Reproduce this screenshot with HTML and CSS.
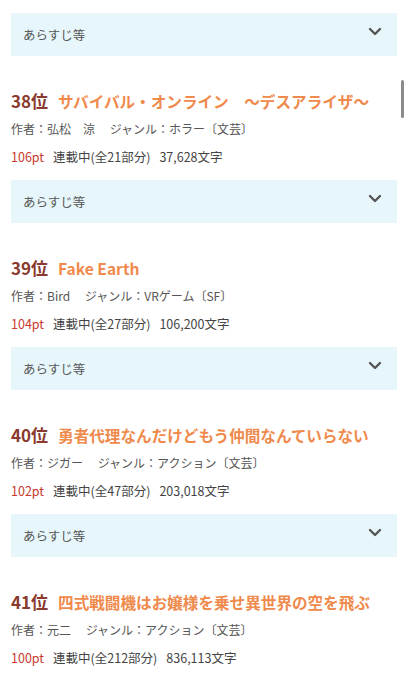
FILE: index.html
```html
<!DOCTYPE html>
<html lang="ja">
<head>
<meta charset="utf-8">
<link rel="stylesheet" href="styles.css">
</head>
<body>
<div class="list">
  <div class="summary"><span>あらすじ等</span><svg class="chev" viewBox="0 0 14 9" width="14" height="9"><path d="M2 2 L7 7 L12 2" fill="none" stroke="#555" stroke-width="2.4" stroke-linecap="round" stroke-linejoin="round"/></svg></div>

  <div class="item">
    <div class="title"><span class="rank">38位</span><span class="name">サバイバル・オンライン　～デスアライザ～</span></div>
    <div class="author">作者：弘松　涼　 ジャンル：ホラー〔文芸〕</div>
    <div class="meta"><span class="pt">106pt</span><span>連載中(全21部分)</span><span>37,628文字</span></div>
    <div class="summary"><span>あらすじ等</span><svg class="chev" viewBox="0 0 14 9" width="14" height="9"><path d="M2 2 L7 7 L12 2" fill="none" stroke="#555" stroke-width="2.4" stroke-linecap="round" stroke-linejoin="round"/></svg></div>
  </div>

  <div class="item">
    <div class="title"><span class="rank">39位</span><span class="name">Fake Earth</span></div>
    <div class="author">作者：Bird　 ジャンル：VRゲーム〔SF〕</div>
    <div class="meta"><span class="pt">104pt</span><span>連載中(全27部分)</span><span>106,200文字</span></div>
    <div class="summary"><span>あらすじ等</span><svg class="chev" viewBox="0 0 14 9" width="14" height="9"><path d="M2 2 L7 7 L12 2" fill="none" stroke="#555" stroke-width="2.4" stroke-linecap="round" stroke-linejoin="round"/></svg></div>
  </div>

  <div class="item">
    <div class="title"><span class="rank">40位</span><span class="name">勇者代理なんだけどもう仲間なんていらない</span></div>
    <div class="author">作者：ジガー　 ジャンル：アクション〔文芸〕</div>
    <div class="meta"><span class="pt">102pt</span><span>連載中(全47部分)</span><span>203,018文字</span></div>
    <div class="summary"><span>あらすじ等</span><svg class="chev" viewBox="0 0 14 9" width="14" height="9"><path d="M2 2 L7 7 L12 2" fill="none" stroke="#555" stroke-width="2.4" stroke-linecap="round" stroke-linejoin="round"/></svg></div>
  </div>

  <div class="item">
    <div class="title"><span class="rank">41位</span><span class="name">四式戦闘機はお嬢様を乗せ異世界の空を飛ぶ</span></div>
    <div class="author">作者：元二　 ジャンル：アクション〔文芸〕</div>
    <div class="meta"><span class="pt">100pt</span><span>連載中(全212部分)</span><span>836,113文字</span></div>
  </div>
</div>
<div class="scrollbar"></div>
</body>
</html>
```
FILE: styles.css
```css
html, body {
  margin: 0;
  padding: 0;
  background: #fff;
  font-family: "Noto Sans CJK JP", "Noto Sans", sans-serif;
  color: #444;
  overflow: hidden;
}
.list {
  padding: 13px 11px 0 11px;
}
.summary {
  height: 43px;
  background: #e6f6fa;
  display: flex;
  justify-content: space-between;
  align-items: flex-start;
  padding: 0 15px 0 12px;
  box-sizing: border-box;
  font-size: 12.5px;
  color: #555;
}
.summary span {
  line-height: 43px;
}
.chev {
  margin-top: 14px;
}
.item {
  margin-top: 33px;
}
.title {
  height: 24px;
  line-height: 24px;
  font-weight: bold;
  white-space: nowrap;
  display: flex;
  gap: 10px;
}
.rank {
  color: #8a3a2e;
  font-size: 17px;
}
.name {
  color: #ef8a4c;
  font-size: 15.6px;
}
.author {
  margin-top: 6px;
  height: 20px;
  line-height: 20px;
  font-size: 12px;
  color: #555;
  white-space: nowrap;
}
.meta {
  margin-top: 8px;
  height: 20px;
  line-height: 20px;
  font-size: 12.5px;
  color: #444;
  display: flex;
  gap: 9px;
  margin-bottom: 13px;
}
.pt {
  color: #c9392e;
}
.scrollbar {
  position: absolute;
  left: 401px;
  top: 80px;
  width: 3px;
  height: 38px;
  border-radius: 2px;
  background: #8a8a8a;
}
```
